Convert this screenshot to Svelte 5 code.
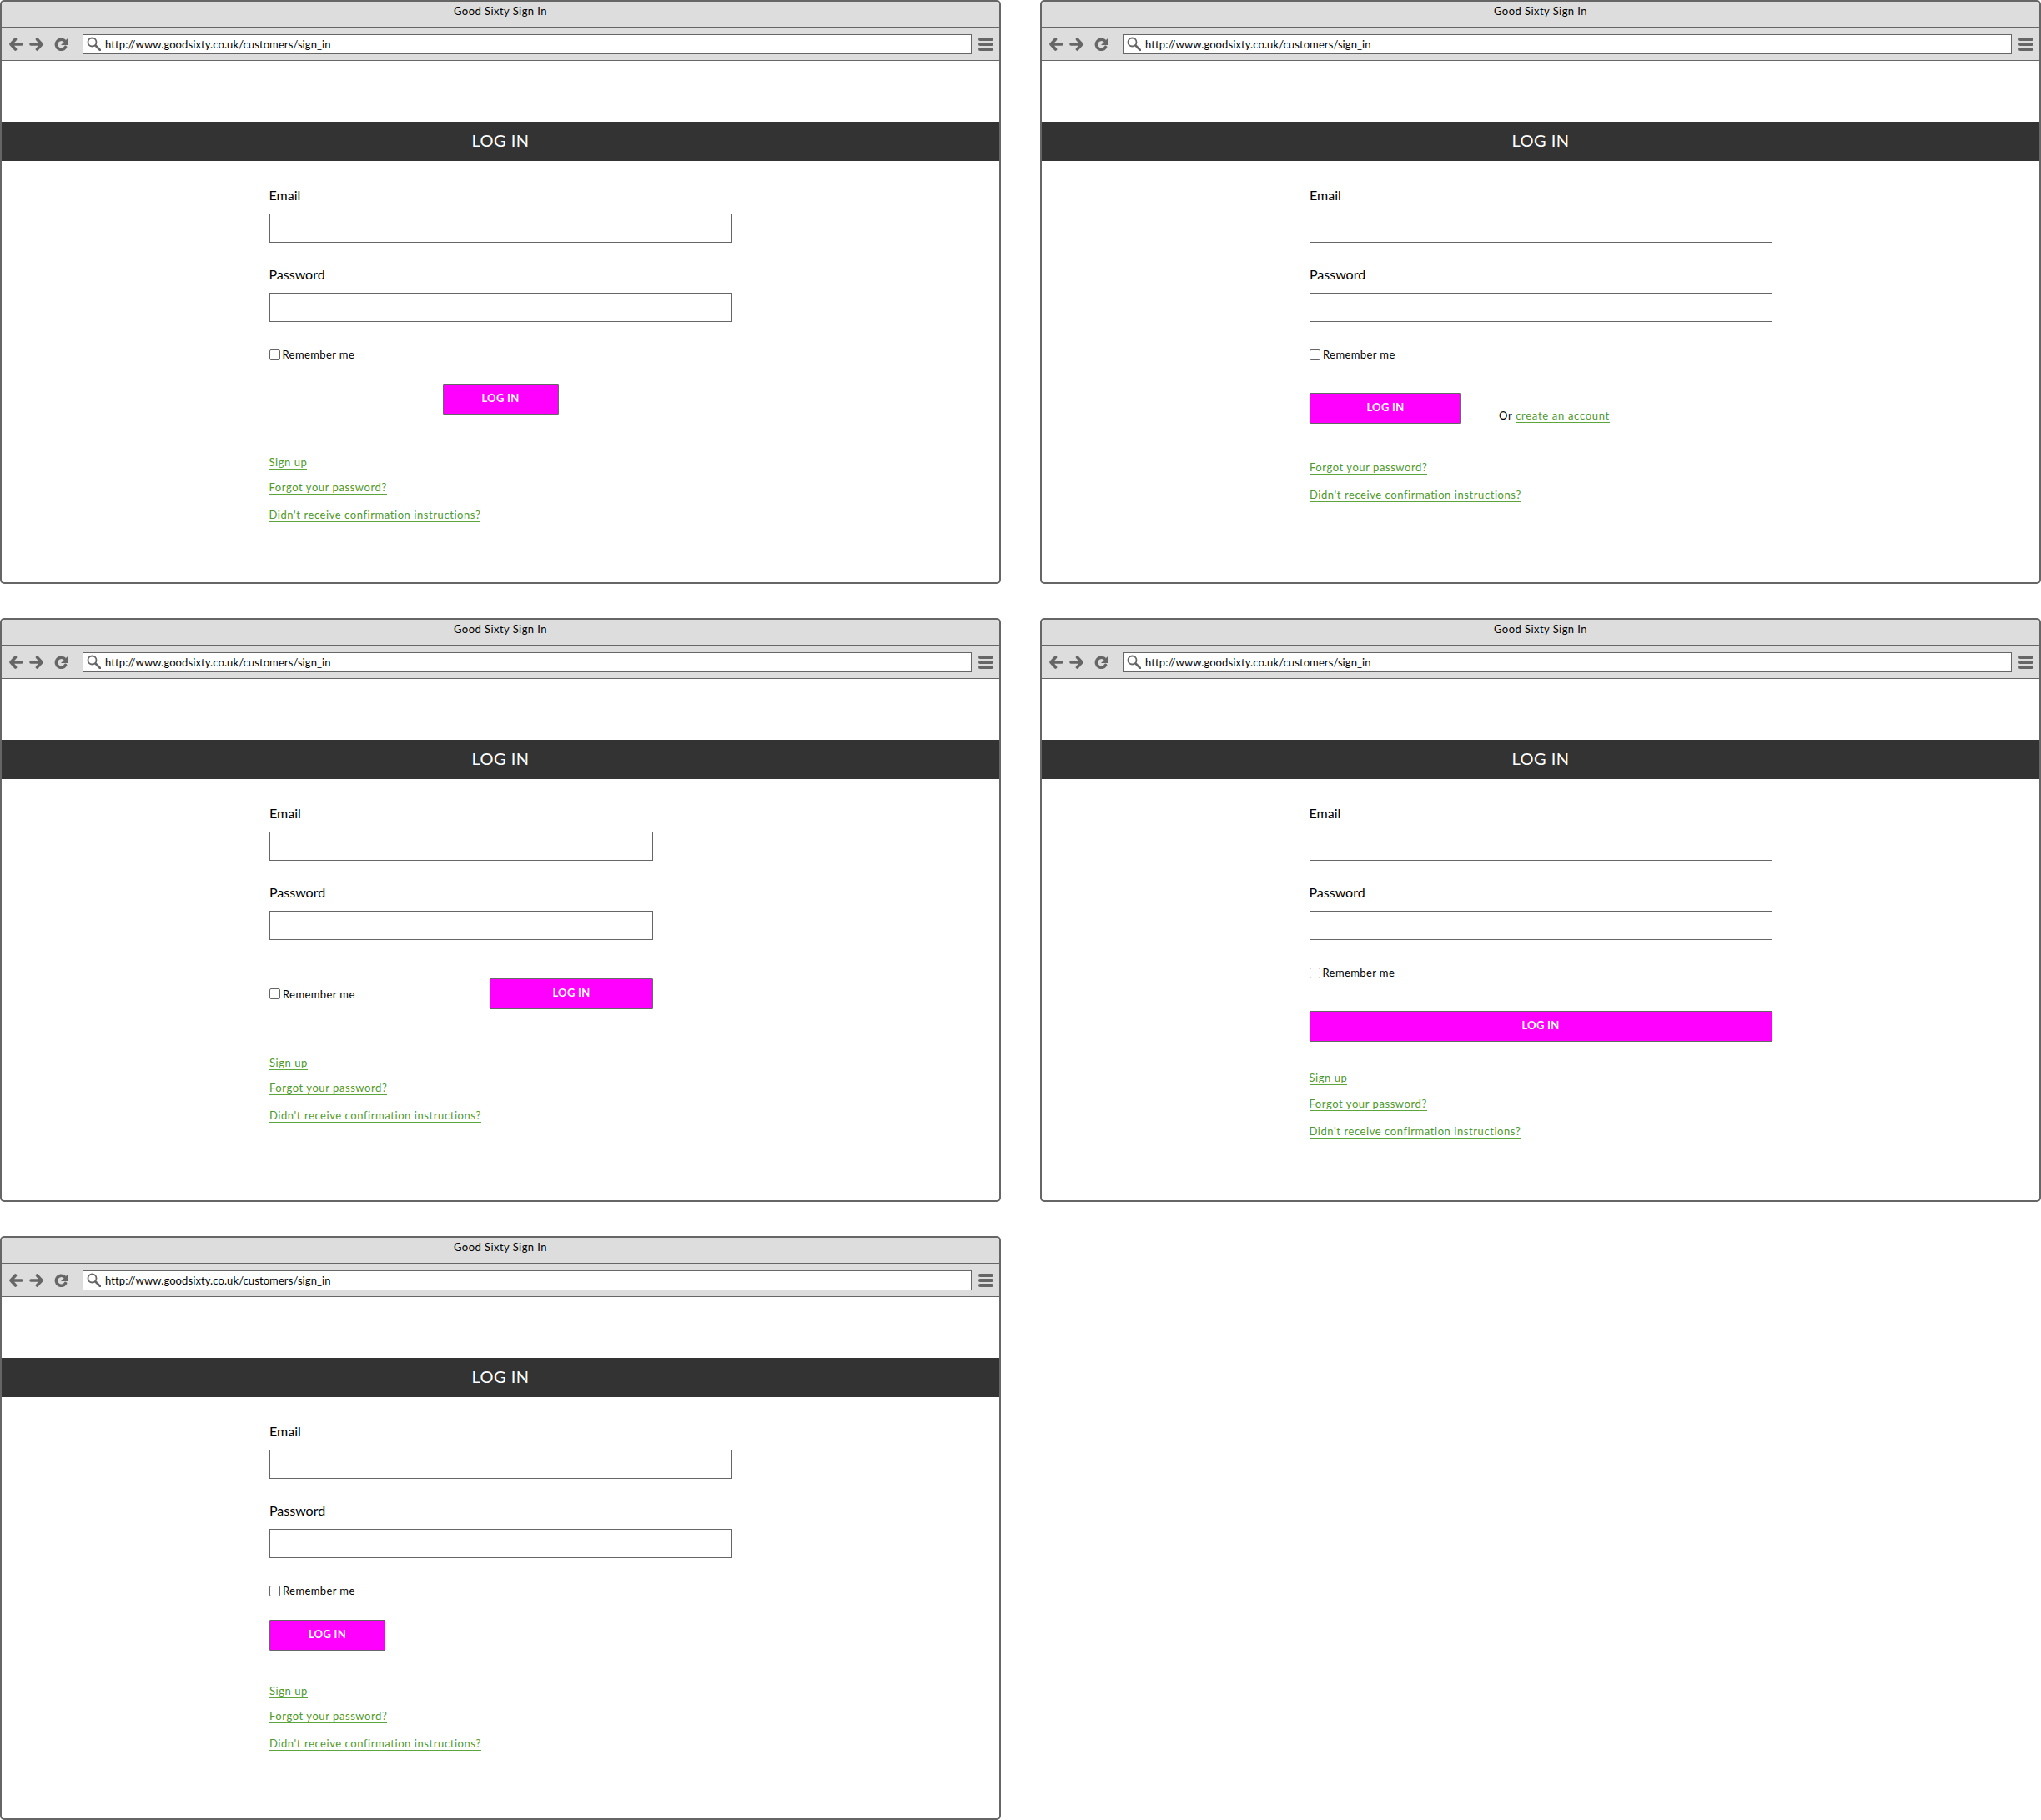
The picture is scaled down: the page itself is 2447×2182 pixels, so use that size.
<script>
  const variants = ["centered", "inline", "split", "full", "left"];
</script>

<div class="board">
  {#each variants as variant}
    <section class="window {variant}">
      <header class="title">Good Sixty Sign In</header>
      <div class="toolbar">
        <svg class="nav" width="72" height="16" viewBox="0 0 72 16">
          <path class="line" d="M7.500 2 2 8l5.500 6M3 8h12" />
          <path class="line" d="M33.500 2 39 8l-5.500 6M38 8H26" />
          <path class="line" d="M67.500 11.500A6 6 0 1 1 66 3.500" stroke-linecap="butt" />
          <path d="M71 0v9h-9z" />
        </svg>
        <div class="address">
          <svg width="17" height="17" viewBox="0 0 17 17">
            <circle cx="6.500" cy="6.500" r="5" fill="none" stroke="#666" stroke-width="1.800" />
            <path d="M10.500 10.500 16 16" stroke="#666" stroke-width="2.600" stroke-linecap="round" />
          </svg>
          <span>http://www.goodsixty.co.uk/customers/sign_in</span>
        </div>
        <div class="menu"><i></i><i></i><i></i></div>
      </div>
      <div class="page">
        <h1>LOG IN</h1>
        <form>
          <label class="field">
            <span>Email</span>
            <input type="text" />
          </label>
          <label class="field">
            <span>Password</span>
            <input type="text" />
          </label>
          <div class="actions">
            <label class="remember"><b></b>Remember me</label>
            <div class="submit">
              <button type="button">LOG IN</button>
              {#if variant === "inline"}
                <p class="or">Or <a href="#top">create an account</a></p>
              {/if}
            </div>
          </div>
          <ul class="links">
            {#if variant !== "inline"}
              <li><a href="#top">Sign up</a></li>
            {/if}
            <li><a href="#top">Forgot your password?</a></li>
            <li><a href="#top">Didn't receive confirmation instructions?</a></li>
          </ul>
        </form>
      </div>
    </section>
  {/each}
</div>

<style>
  :global(body) {
    margin: 0;
    background: #fff;
  }

  .board {
    display: grid;
    grid-template-columns: 1200px 1200px;
    grid-auto-rows: 700px;
    column-gap: 47px;
    row-gap: 41px;
    font-family: Lato, "Liberation Sans", sans-serif;
    color: #000;
  }

  .window {
    box-sizing: border-box;
    border: 2px solid #666;
    border-radius: 5px;
    overflow: hidden;
    display: flex;
    flex-direction: column;
  }

  .title {
    height: 30px;
    background: #ddd;
    border-bottom: 1px solid #666;
    text-align: center;
    font-size: 13px;
    line-height: 23px;
    letter-spacing: 0.45px;
  }

  .toolbar {
    height: 39px;
    background: #ddd;
    border-bottom: 1px solid #666;
    display: flex;
    align-items: center;
    padding: 0 7px 0 9px;
  }

  .nav {
    fill: #666;
    margin-right: 16px;
  }

  .line {
    fill: none;
    stroke: #666;
    stroke-width: 3.6;
    stroke-linecap: round;
    stroke-linejoin: round;
  }

  .address {
    flex: 1;
    height: 24px;
    box-sizing: border-box;
    background: #fff;
    border: 1px solid #666;
    display: flex;
    align-items: center;
    gap: 5px;
    padding-left: 4px;
    font-size: 13px;
    letter-spacing: 0.1px;
  }

  .menu {
    width: 18px;
    margin-left: 8px;
    display: flex;
    flex-direction: column;
    gap: 2px;
  }

  .menu i {
    height: 4px;
    border-radius: 2px;
    background: #666;
  }

  .page {
    padding-top: 73px;
  }

  h1 {
    margin: 0;
    height: 47px;
    background: #333;
    color: #fff;
    text-align: center;
    font-size: 20px;
    font-weight: 400;
    line-height: 45px;
    letter-spacing: 0.5px;
  }

  form {
    width: 555px;
    margin: 0 auto;
    padding-top: 32px;
  }

  .field {
    display: block;
    margin-bottom: 29px;
    font-size: 16px;
  }

  .field span {
    display: block;
    line-height: 18px;
    margin-bottom: 13px;
  }

  .field input {
    display: block;
    box-sizing: border-box;
    width: 100%;
    height: 35px;
    padding: 0;
    background: #fff;
    border: 1px solid #666;
  }

  .actions {
    margin-top: 31px;
  }

  .remember {
    display: flex;
    align-items: center;
    gap: 3px;
    font-size: 13px;
    line-height: 16px;
    letter-spacing: 0.4px;
  }

  .remember b {
    width: 11px;
    height: 11px;
    border: 1px solid #666;
    border-radius: 2px;
  }

  button {
    box-sizing: border-box;
    width: 139px;
    height: 37px;
    padding: 0 0 3px;
    background: #f0f;
    border: 1px solid #666;
    border-radius: 1px;
    color: #fff;
    font: 700 13px Lato, "Liberation Sans", sans-serif;
    letter-spacing: 0.3px;
  }

  .submit {
    margin-top: 27px;
  }

  .or {
    margin: 0;
    padding-bottom: 2px;
    font-size: 13px;
    letter-spacing: 0.7px;
  }

  a {
    color: #4f9a2c;
    text-decoration: none;
    border-bottom: 1px solid #5aa63a;
  }

  .links {
    list-style: none;
    margin: 0;
    padding: 49px 0 0;
    font-size: 13px;
    letter-spacing: 0.57px;
    line-height: 16px;
  }

  .links li {
    margin-bottom: 14px;
  }

  .links li:nth-last-child(2) {
    margin-bottom: 17px;
  }

  .centered .submit {
    display: flex;
    justify-content: center;
  }

  .inline form {
    margin-left: 321px;
    margin-right: auto;
  }

  .inline .submit {
    display: flex;
    align-items: flex-end;
    gap: 45px;
    margin-top: 38px;
  }

  .inline button {
    width: 182px;
  }

  .inline .links {
    padding-top: 44px;
  }

  .split form {
    width: 460px;
    margin-left: 321px;
    margin-right: auto;
  }

  .split .actions {
    display: flex;
    align-items: center;
    justify-content: space-between;
    margin-top: 46px;
  }

  .split .field:nth-child(2) {
    margin-bottom: 0;
  }

  .split .submit {
    margin-top: 0;
  }

  .split button {
    width: 196px;
  }

  .split .links {
    padding-top: 56px;
  }

  .full .submit {
    margin-top: 38px;
  }

  .full button {
    width: 100%;
  }

  .full .links {
    padding-top: 35px;
  }

  .full .links li:first-child {
    margin-bottom: 15px;
  }

  .left form {
    margin-left: 321px;
  }

  .left .links {
    padding-top: 40px;
  }
</style>
